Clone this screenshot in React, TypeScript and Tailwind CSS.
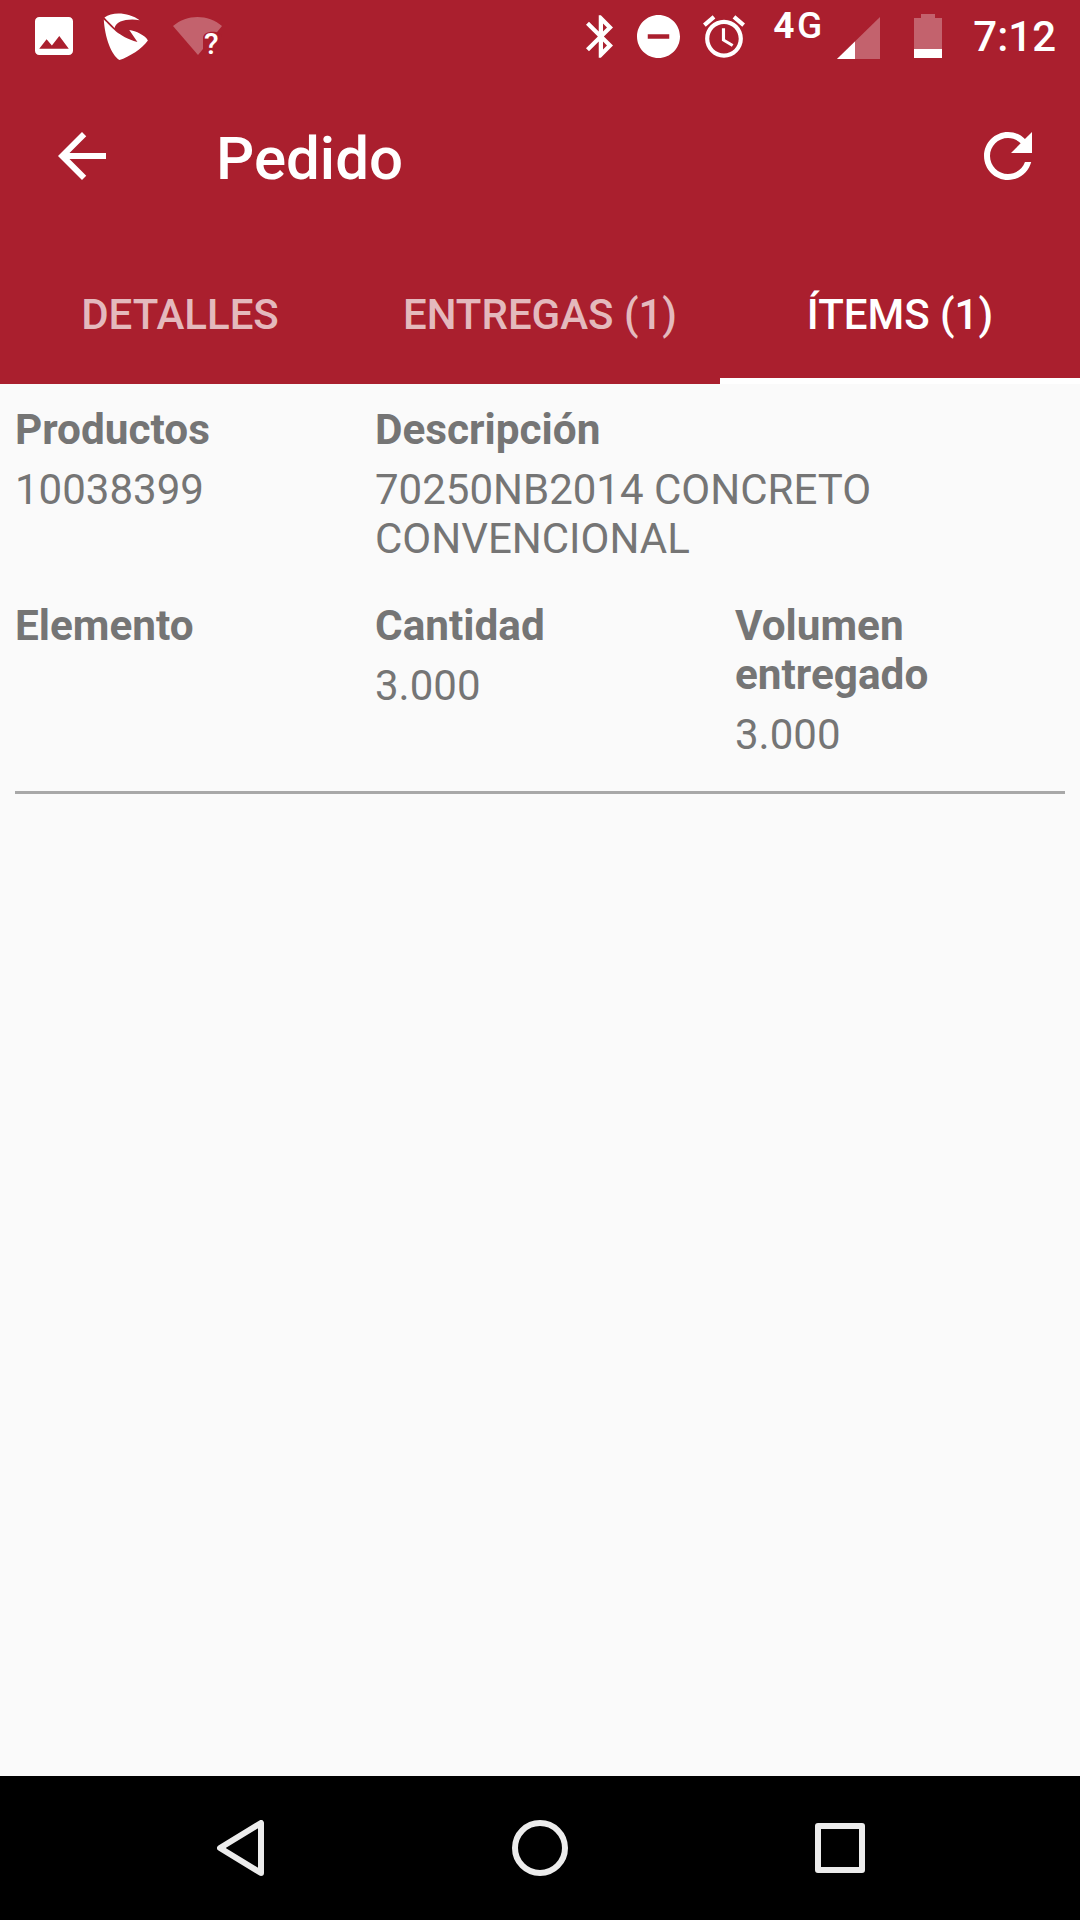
const Field = ({ label, value, className = '' }: { label: string; value?: string; className?: string }) => (
  <div className={className}>
    <div className="text-[42.3px] font-bold text-[#757575]">{label}</div>
    {value && <div className="mt-[11px] text-[42px] text-[#757575]">{value}</div>}
  </div>
);

const StatusBar = () => (
  <div className="flex h-[72px] items-start text-white">
    <svg className="ml-[35px] mt-[17px] h-[38px] w-[38px]" viewBox="3 3 18 18" fill="currentColor">
      <path d="M21 19V5c0-1.1-.9-2-2-2H5c-1.1 0-2 .9-2 2v14c0 1.1.9 2 2 2h14c1.1 0 2-.9 2-2zM8.5 13.5l2.5 3.01L14.5 12l4.5 6H5l3.5-4.5z" />
    </svg>
    <svg className="ml-[30px] mt-[12px] h-[49px] w-[46px]" viewBox="310 33 140 150" fill="currentColor">
      <path d="M314 50C340 30 390 35 422 58C385 52 350 60 345 82C335 70 322 60 314 50Z" />
      <path d="M312 56C335 78 355 108 415 125L390 88C410 90 440 105 447 120C430 145 390 170 360 180C335 165 315 110 312 56Z" />
    </svg>
    <svg className="ml-[24px] mt-[17px] h-[38px] w-[49px] overflow-visible" viewBox="0 0 49 38">
      <path d="M0 9C14 -3 35 -3 49 9L25 38Z" fill="#fff" fillOpacity="0.3" />
      <path d="M30 38V21C30 13 48 13 49 20V38Z" fill="#aa1f2e" />
      <text x="31" y="37" fill="#fff" fontSize="30" fontWeight="500" fontFamily="Roboto, sans-serif">?</text>
    </svg>
    <svg className="ml-auto mt-[15px] h-[43px] w-[27px]" viewBox="5 2 12.71 20" fill="currentColor">
      <path d="M17.71 7.71L12 2h-1v7.59L6.41 5 5 6.41 10.59 12 5 17.59 6.41 19 11 14.41V22h1l5.71-5.71-4.3-4.29 4.3-4.29zM13 5.83l1.88 1.88L13 9.59V5.83zm1.88 10.46L13 18.17v-3.76l1.88 1.88z" />
    </svg>
    <svg className="ml-[24px] mt-[15px] h-[43px] w-[43px]" viewBox="2 2 20 20" fill="currentColor">
      <path d="M12 2C6.48 2 2 6.48 2 12s4.48 10 10 10 10-4.48 10-10S17.52 2 12 2zm5 11H7v-2h10v2z" />
    </svg>
    <svg className="ml-[23px] mt-[15px] h-[43px] w-[42px]" viewBox="2 1.86 20 20.14" fill="currentColor">
      <path d="M22 5.72l-4.6-3.86-1.29 1.53 4.6 3.86L22 5.72zM7.88 3.39L6.6 1.86 2 5.71l1.29 1.53 4.59-3.85zM12.5 8H11v6l4.75 2.85.75-1.23-4-2.37V8zM12 4c-4.97 0-9 4.03-9 9s4.03 9 9 9 9-4.03 9-9-4.03-9-9-9zm0 16c-3.87 0-7-3.13-7-7s3.13-7 7-7 7 3.13 7 7-3.13 7-7 7z" />
    </svg>
    <div className="ml-[28px] mt-[4px] flex w-[49px] justify-between text-[37px] leading-[44px]">
      <span className="font-bold">4</span>
      <span className="font-medium">G</span>
    </div>
    <svg className="ml-[15px] mt-[17px] h-[42px] w-[43px]" viewBox="0 0 43 42">
      <path d="M0 42L43 0V42Z" fill="#fff" fillOpacity="0.3" />
      <path d="M0 42L18 24.4V42Z" fill="#fff" />
    </svg>
    <div className="ml-[34px] mt-[14px] flex h-[44px] w-[28px] flex-col items-center">
      <div className="h-[4px] w-[14px] bg-white/30" />
      <div className="h-[31px] w-full bg-white/30" />
      <div className="h-[9px] w-full bg-white" />
    </div>
    <div className="ml-[31px] mr-[24px] mt-[15px] text-[42px] font-medium leading-[44px]">7:12</div>
  </div>
);

export default function App() {
  return (
    <div className="flex min-h-[1920px] w-[1080px] flex-col bg-[#fafafa] font-[Roboto,sans-serif]">
      <div className="bg-[#aa1f2e] text-white">
        <StatusBar />

        {/* Toolbar */}
        <div className="flex h-[168px] items-center pl-[46px] pr-[36px]">
          <svg className="h-[72px] w-[72px]" viewBox="0 0 24 24" fill="currentColor">
            <path d="M20 11H7.83l5.59-5.59L12 4l-8 8 8 8 1.41-1.41L7.83 13H20v-2z" />
          </svg>
          <div className="ml-[98px] pt-[5px] text-[60px] font-medium">Pedido</div>
          <svg className="ml-auto h-[72px] w-[72px]" viewBox="0 0 24 24" fill="currentColor">
            <path d="M17.65 6.35C16.2 4.9 14.21 4 12 4c-4.42 0-7.99 3.58-7.99 8s3.57 8 7.99 8c3.73 0 6.84-2.55 7.73-6h-2.08c-.82 2.33-3.04 4-5.65 4-3.31 0-6-2.69-6-6s2.69-6 6-6c1.66 0 3.14.69 4.22 1.78L13 11h7V4l-2.35 2.35z" />
          </svg>
        </div>

        {/* Tabs */}
        <div className="grid h-[144px] grid-cols-3 text-[42px] font-medium">
          <div className="flex items-center justify-center pt-[4px] text-white/70">DETALLES</div>
          <div className="flex items-center justify-center pt-[4px] text-white/70">ENTREGAS (1)</div>
          <div className="flex items-center justify-center border-b-[6px] border-white pt-[10px]">ÍTEMS (1)</div>
        </div>
      </div>

      {/* Item */}
      <div className="flex-1 px-[15px] pt-[21px] leading-[49px]">
        <div className="grid grid-cols-[360px_360px_1fr] gap-y-[38px] pb-[32px]">
          <Field label="Productos" value="10038399" />
          <Field className="col-span-2" label="Descripción" value="70250NB2014 CONCRETO CONVENCIONAL" />
          <Field label="Elemento" />
          <Field label="Cantidad" value="3.000" />
          <Field className="pr-[100px]" label="Volumen entregado" value="3.000" />
        </div>
        <div className="h-[3px] bg-[#a8a8a8]" />
      </div>

      {/* Navigation bar */}
      <div className="grid h-[144px] grid-cols-3 items-center justify-items-center bg-black px-[90px]">
        <svg className="h-[56px] w-[47px]" viewBox="0 0 47 56" fill="none" stroke="#ececec" strokeWidth="6" strokeLinejoin="round">
          <path d="M44 3V53L3 28Z" />
        </svg>
        <div className="h-[56px] w-[56px] rounded-full border-[6px] border-[#ececec]" />
        <div className="h-[50px] w-[50px] rounded-[3px] border-[6px] border-[#ececec]" />
      </div>
    </div>
  );
}
